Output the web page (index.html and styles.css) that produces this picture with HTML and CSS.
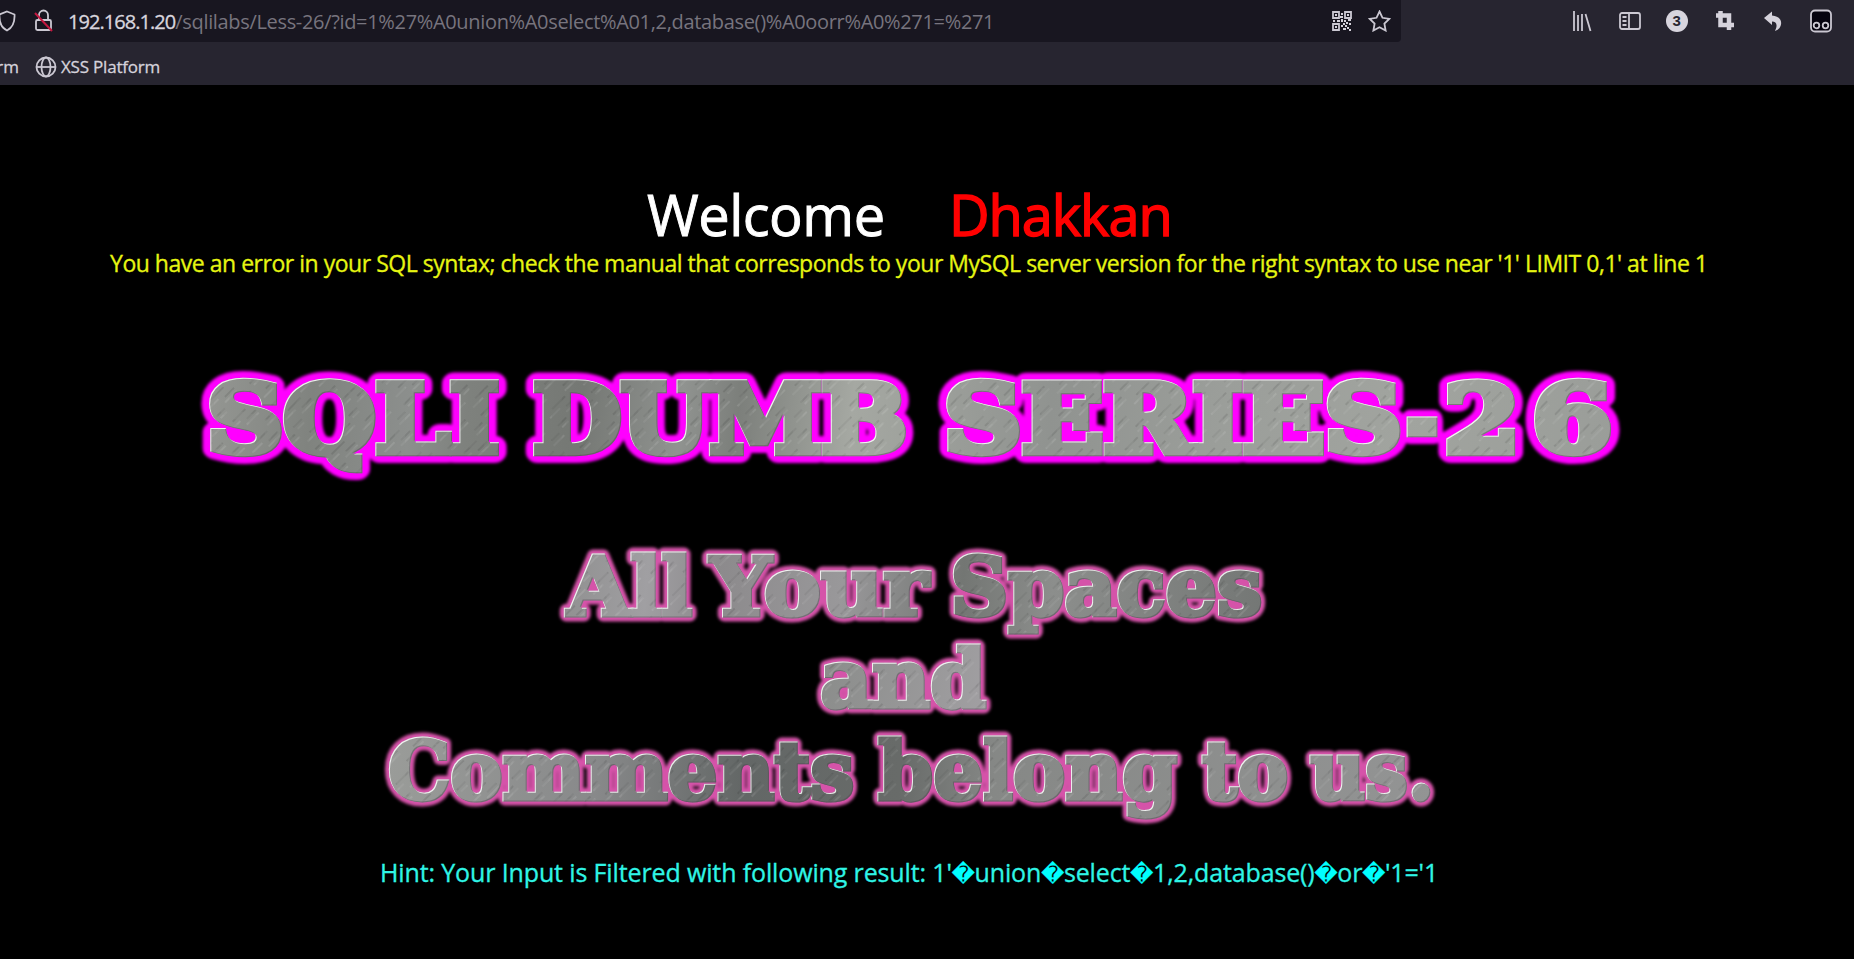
FILE: index.html
```html
<!DOCTYPE html>
<html lang="en">
<head>
<meta charset="utf-8">
<title>Less-26</title>
<link rel="stylesheet" href="styles.css">
</head>
<body>
<header class="browser">
  <div class="navbar">
    <div class="urlbar">
      <svg class="shield" width="17" height="22" viewBox="1 0 17 22"><path d="M8 1.500 L15.500 4.500 C16 13 13 18 8 20.500 C3 18 0 13 .5 4.500 Z"/></svg>
      <svg class="lock" width="20" height="24" viewBox="0 0 20 24"><rect x="2" y="11" width="15" height="10" rx="1.500"/><path d="M5 11V6a4.500 4.500 0 0 1 9 0v5"/><path class="slash" d="M1 4L18 22"/></svg>
      <div class="url"><span class="host">192.168.1.20</span><span class="path">/sqlilabs/Less-26/?id=1%27%A0union%A0select%A01,2,database()%A0oorr%A0%271=%271</span></div>
      <svg class="qr" width="20" height="20" viewBox="0 0 20 20"><path class="line" d="M1 1h6v6H1zM13 1h6v6h-6zM1 13h6v6H1z"/><path class="solid" d="M3 3h2v2H3zM15 3h2v2h-2zM3 15h2v2H3zM9 2h2v2H9zM8 5h3v2H8zM1 9h2v2H1zM5 9h3v2H5zM9 8h2v3H9zM12 9h2v2h-2zM16 8h3v2h-3zM14 11h2v2h-2zM17 12h2v2h-2zM11 12h2v2h-2zM9 14h2v2H9zM13 14h2v2h-2zM15 16h2v2h-2zM11 17h3v2h-3zM17 18h2v2h-2z"/></svg>
      <svg class="star" width="23" height="22" viewBox="0 0 23 22"><path d="M11.500 1.500l3 6.300 6.800 1-4.900 4.800 1.200 6.900-6.100-3.300-6.100 3.300 1.200-6.900L1.700 8.800l6.800-1z"/></svg>
    </div>
    <div class="tools">
      <svg width="20" height="22" viewBox="0 0 20 22"><path class="line" d="M2 1v20M6 5v16M10 4v17M13.500 4L18.500 21"/></svg>
      <svg width="22" height="22" viewBox="0 0 22 22"><rect class="line" x="1" y="3" width="20" height="16" rx="2"/><path class="line" d="M10 3v16M3.500 7h4M3.500 11h4M3.500 15h4"/></svg>
      <span class="badge">3</span>
      <svg width="20" height="22" viewBox="0 0 20 22"><path class="thick" d="M5.500 1v14H19M1 5.500h13V20"/></svg>
      <svg width="20" height="22" viewBox="0 0 20 22"><path class="solid" d="M1 8L9 1.500V5.500C17 6 20.500 12 16.500 18Q15 20 12 21C15 15 13.500 11.500 9 11.500V15z"/></svg>
      <svg width="22" height="24" viewBox="0 0 22 24"><rect class="monkey" x="1" y="1.500" width="20" height="21" rx="4"/><circle class="line" cx="6.500" cy="16.500" r="2.800"/><circle class="line" cx="15.500" cy="16.500" r="2.800"/></svg>
    </div>
  </div>
  <nav class="bookmarks">
    <span class="cut">rm</span>
    <svg width="22" height="22" viewBox="0 0 22 22"><circle class="line" cx="11" cy="11" r="9.500"/><ellipse class="line" cx="11" cy="11" rx="4.500" ry="9.500"/><path class="line" d="M1.500 11h19"/></svg>
    <span class="mark">XSS Platform</span>
  </nav>
</header>
<main>
  <h1 class="welcome"><span class="hello">Welcome</span><span class="name">Dhakkan</span></h1>
  <p class="error">You have an error in your SQL syntax; check the manual that corresponds to your MySQL server version for the right syntax to use near '1' LIMIT 0,1' at line 1</p>
  <svg class="art" width="1854" height="540" viewBox="0 310 1854 540">
    <defs>
      <linearGradient id="steel" gradientUnits="userSpaceOnUse" x1="200" y1="380" x2="1610" y2="520">
        <stop offset="0" stop-color="#969894"/><stop offset=".08" stop-color="#80837f"/><stop offset=".15" stop-color="#8c8f8d"/><stop offset=".19" stop-color="#7e817d"/><stop offset=".27" stop-color="#757874"/><stop offset=".34" stop-color="#909390"/><stop offset=".38" stop-color="#7c7f7b"/><stop offset=".46" stop-color="#a5a8a2"/><stop offset=".6" stop-color="#909390"/><stop offset=".72" stop-color="#9b9e9a"/><stop offset=".85" stop-color="#a1a49f"/><stop offset="1" stop-color="#9a9d99"/>
      </linearGradient>
      <linearGradient id="steel-top" gradientUnits="userSpaceOnUse" x1="565" y1="550" x2="1262" y2="610">
        <stop offset="0" stop-color="#909090"/><stop offset=".12" stop-color="#a09fa2"/><stop offset=".22" stop-color="#8c8a8c"/><stop offset=".4" stop-color="#99989a"/><stop offset=".57" stop-color="#737673"/><stop offset=".7" stop-color="#8c8e8c"/><stop offset="1" stop-color="#747775"/>
      </linearGradient>
      <linearGradient id="steel-mid" gradientUnits="userSpaceOnUse" x1="820" y1="650" x2="990" y2="690">
        <stop offset="0" stop-color="#8a8c8a"/><stop offset="1" stop-color="#a19fa2"/>
      </linearGradient>
      <linearGradient id="steel-low" gradientUnits="userSpaceOnUse" x1="388" y1="740" x2="1434" y2="800">
        <stop offset="0" stop-color="#9a9c99"/><stop offset=".2" stop-color="#88898a"/><stop offset=".34" stop-color="#636766"/><stop offset=".49" stop-color="#686b69"/><stop offset=".58" stop-color="#868886"/><stop offset="1" stop-color="#939494"/>
      </linearGradient>
      <pattern id="brush" width="47" height="31" patternUnits="userSpaceOnUse" patternTransform="rotate(-45)">
        <path d="M0 2h14M16 9h17M2 17h9M30 24h15" stroke="#ffffff" stroke-opacity=".16" stroke-width=".7"/>
        <path d="M20 5h13M0 13h12M32 19h11M8 28h18" stroke="#000000" stroke-opacity=".14" stroke-width=".7"/>
      </pattern>
      <filter id="metal" filterUnits="userSpaceOnUse" x="150" y="330" width="1550" height="510" color-interpolation-filters="sRGB">
        <feOffset in="SourceAlpha" dx="1" dy="1" result="shift"/>
        <feComposite in="SourceAlpha" in2="shift" operator="out" result="edge"/>
        <feFlood flood-color="#ffffff" flood-opacity=".85"/><feComposite in2="edge" operator="in" result="light"/>
        <feOffset in="SourceAlpha" dx="-1" dy="-1" result="back"/>
        <feComposite in="SourceAlpha" in2="back" operator="out" result="edge2"/>
        <feFlood flood-color="#504050" flood-opacity=".45"/><feComposite in2="edge2" operator="in" result="dark"/>
        <feMerge><feMergeNode in="SourceGraphic"/><feMergeNode in="dark"/><feMergeNode in="light"/></feMerge>
      </filter>
      <filter id="soft" filterUnits="userSpaceOnUse" x="150" y="330" width="1550" height="510"><feGaussianBlur stdDeviation="1.700"/></filter>
      <g id="title">
        <text x="207" y="451" textLength="292" lengthAdjust="spacingAndGlyphs">SQLI</text>
        <text x="533" y="451" textLength="374" lengthAdjust="spacingAndGlyphs">DUMB</text>
        <text x="944" y="451" textLength="458" lengthAdjust="spacingAndGlyphs">SERIES</text>
        <text x="1406" y="451" textLength="32" lengthAdjust="spacingAndGlyphs">-</text>
        <text x="1444" y="451" textLength="76" lengthAdjust="spacingAndGlyphs">2</text>
        <text x="1532" y="451" textLength="80" lengthAdjust="spacingAndGlyphs">6</text>
      </g>
      <g id="row-top">
        <text x="567" y="614" textLength="125" lengthAdjust="spacingAndGlyphs">All</text>
        <text x="710" y="614" textLength="218" lengthAdjust="spacingAndGlyphs">Your</text>
        <text x="950" y="614" textLength="312" lengthAdjust="spacingAndGlyphs">Spaces</text>
      </g>
      <g id="row-mid">
        <text x="820" y="706" textLength="166" lengthAdjust="spacingAndGlyphs">and</text>
      </g>
      <g id="row-low">
        <text x="388" y="798" textLength="466" lengthAdjust="spacingAndGlyphs">Comments</text>
        <text x="878" y="798" textLength="299" lengthAdjust="spacingAndGlyphs">belong</text>
        <text x="1202" y="798" textLength="86" lengthAdjust="spacingAndGlyphs">to</text>
        <text x="1310" y="798" textLength="124" lengthAdjust="spacingAndGlyphs">us.</text>
      </g>
    </defs>
    <use href="#title" class="title glow"/>
    <g class="title face" filter="url(#metal)"><use href="#title"/><use href="#title" class="grain"/></g>
    <g class="motto glow"><use href="#row-top"/><use href="#row-mid"/><use href="#row-low"/></g>
    <g class="motto face" filter="url(#metal)">
      <use href="#row-top" class="top"/><use href="#row-mid" class="mid"/><use href="#row-low" class="low"/>
      <g class="grain"><use href="#row-top"/><use href="#row-mid"/><use href="#row-low"/></g>
    </g>
  </svg>
  <p class="hint">Hint: Your Input is Filtered with following result: 1'<i>&#xFFFD;</i>union<i>&#xFFFD;</i>select<i>&#xFFFD;</i>1,2,database()<i>&#xFFFD;</i>or<i>&#xFFFD;</i>'1='1</p>
</main>
</body>
</html>
```
FILE: styles.css
```css
* { box-sizing: border-box; }
body { margin: 0; width: 1854px; height: 959px; overflow: hidden; background: #000; font-family: "Open Sans", "Noto Sans", sans-serif; }
.browser { height: 85px; background: #272530; color: #d5d2db; }
.navbar { display: flex; justify-content: space-between; height: 42px; padding-right: 22px; }
.urlbar { display: flex; align-items: center; width: 1401px; background: #181620; padding-right: 10px; border-radius: 0 0 4px 0; }
.urlbar svg, .tools svg, .bookmarks svg { flex: none; fill: none; stroke: #cbc8d2; stroke-width: 1.8; }
.urlbar .lock { margin: 0 14px 0 17px; }
.lock .slash { stroke: #c41840; stroke-width: 2; }
.url { flex: 1; font-size: 20px; line-height: 41px; white-space: nowrap; }
.host { color: #d8d5de; letter-spacing: -.95px; -webkit-text-stroke: .3px; }
.path { color: #77747e; letter-spacing: -.33px; }
svg .solid { fill: #d5d2db; stroke: none; }
.urlbar .star { margin-left: 16px; }
.tools { display: flex; align-items: center; justify-content: space-between; width: 260px; }
.tools svg .thick { stroke: #d5d2db; stroke-width: 4.500; }
svg .monkey { fill: #05030f; }
.badge { width: 22px; height: 22px; margin-left: -3px; border-radius: 50%; background: #d8d5de; color: #292631; font: bold 15px/22px "Liberation Sans", sans-serif; text-align: center; }
.bookmarks { display: flex; align-items: center; height: 43px; padding-bottom: 1px; padding-top: 7px; font-size: 17px; white-space: nowrap; -webkit-text-stroke: .3px; }
.cut { width: 19px; direction: rtl; margin-right: 16px; }
.mark { margin-left: 4px; letter-spacing: -.2px; }
.welcome { display: flex; margin: 97px 0 0 647px; font-size: 56px; line-height: 64px; font-weight: 400; -webkit-text-stroke: .9px; }
.hello { color: #fff; width: 302px; letter-spacing: -.5px; }
.name { color: #f00; letter-spacing: -1.1px; -webkit-text-stroke: 1.4px; }
.error { margin: 1px 0 0 110px; color: #e6f512; font-size: 23px; line-height: 32px; letter-spacing: -.477px; white-space: nowrap; -webkit-text-stroke: .3px; }
.art { display: block; margin-top: 32px; font-family: "DejaVu Serif", serif; font-weight: 700; }
.title { font-size: 93px; }
.motto { font-size: 80px; }
.glow { stroke-linejoin: round; filter: url(#soft); }
.title.glow { fill: #f0f; stroke: #f0f; stroke-width: 22px; }
.motto.glow { fill: #d552a9; stroke: #d552a9; stroke-width: 13px; }
.face { fill: url(#steel); stroke: url(#steel); stroke-width: 8.500px; }
.motto.face { stroke-width: 5px; }
.face .top { fill: url(#steel-top); stroke: url(#steel-top); }
.face .mid { fill: url(#steel-mid); stroke: url(#steel-mid); }
.face .low { fill: url(#steel-low); stroke: url(#steel-low); }
.face .grain { fill: url(#brush); stroke: url(#brush); }
.hint { margin: 1px 0 0 380px; color: #2ff5e6; font-size: 25px; line-height: 40px; height: 40px; letter-spacing: -.13px; white-space: nowrap; -webkit-text-stroke: .3px; }
.hint i { color: #0ff; font: 22.500px/1 "DejaVu Sans", sans-serif; letter-spacing: -.4px; }
```
